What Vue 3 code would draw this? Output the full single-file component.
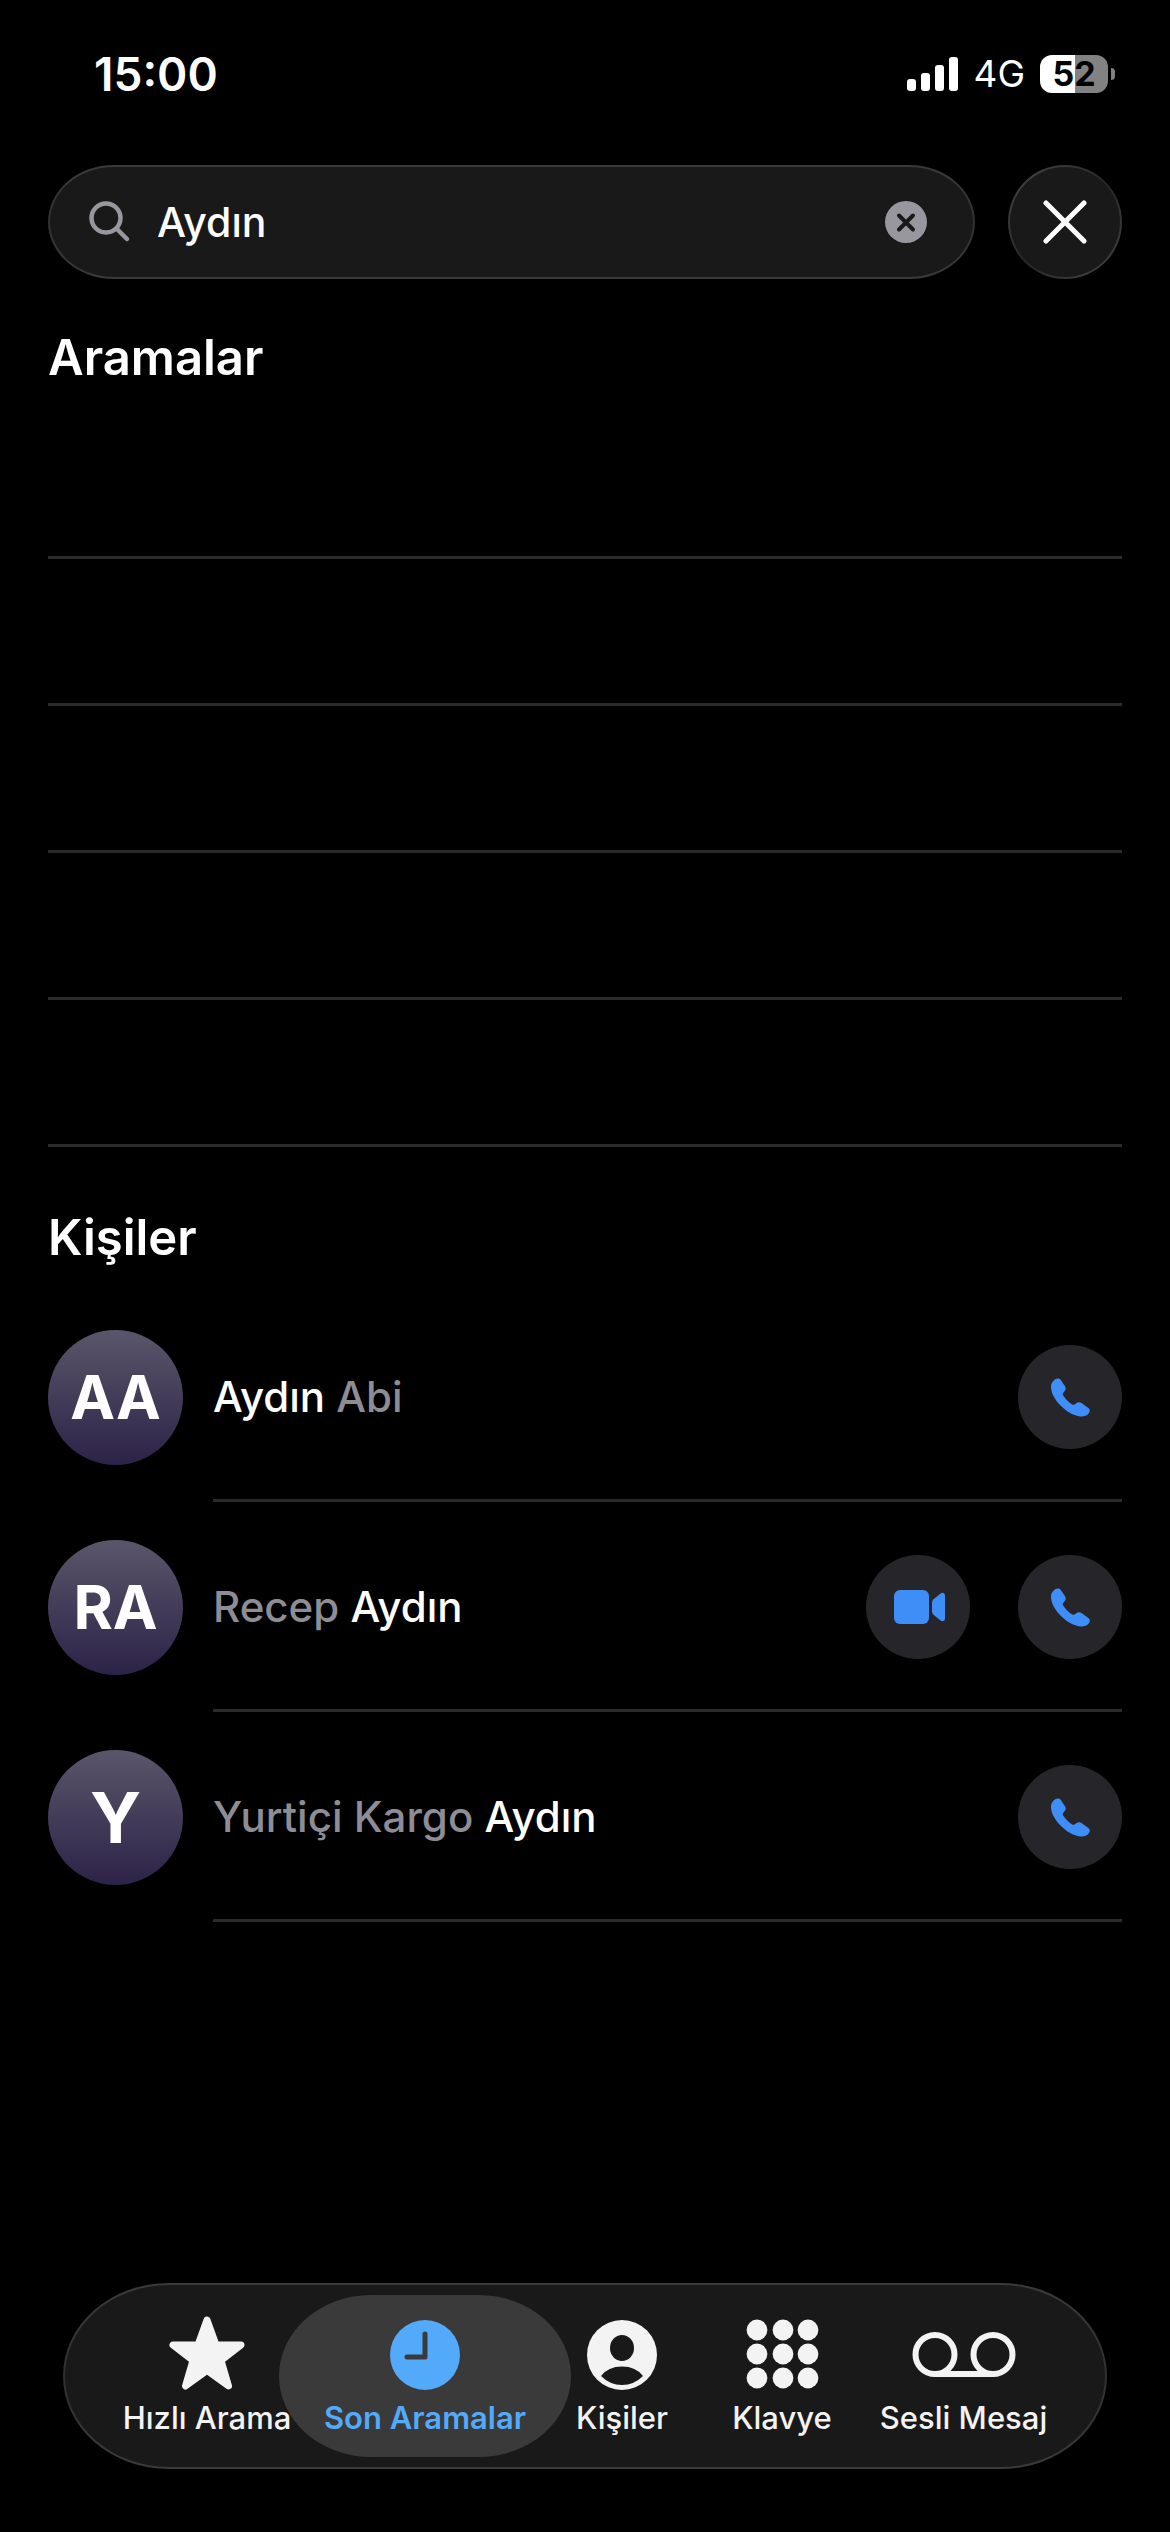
<script setup>
import { ref } from 'vue'

const query = ref('Aydın')

const calls = [1, 2, 3, 4, 5]

const contacts = [
  { initials: 'AA', parts: [{ text: 'Aydın', match: true }, { text: ' Abi' }], video: false },
  { initials: 'RA', parts: [{ text: 'Recep ' }, { text: 'Aydın', match: true }], video: true },
  { initials: 'Y', parts: [{ text: 'Yurtiçi Kargo ' }, { text: 'Aydın', match: true }], video: false }
]

const keypadColumns = [13, 39, 64]
const keypadRows = [14, 38, 62]
</script>

<template>
  <div class="screen">
    <header class="status">
      <time class="clock">15:00</time>
      <div class="indicators">
        <svg class="signal" viewBox="0 0 51 34" aria-hidden="true">
          <rect x="0" y="22" width="9" height="12" rx="3" />
          <rect x="14" y="16" width="9" height="18" rx="3" />
          <rect x="28" y="8" width="9" height="26" rx="3" />
          <rect x="42" y="0" width="9" height="34" rx="3" />
        </svg>
        <span class="network">4G</span>
        <div class="battery">
          <span class="level">52</span>
          <span class="tip"></span>
        </div>
      </div>
    </header>

    <form class="search" role="search" @submit.prevent>
      <div class="field">
        <svg class="lens" viewBox="0 0 42 42" aria-hidden="true">
          <circle cx="17" cy="17" r="14.5" />
          <path d="M27.5 27.5L38 38" />
        </svg>
        <input v-model="query" type="text" aria-label="Ara" />
        <button type="button" class="clear" aria-label="Temizle" @click="query = ''">
          <svg viewBox="0 0 42 42" aria-hidden="true">
            <circle cx="21" cy="21" r="21" />
            <path d="M14 14.5L28 28.5M28 14.5L14 28.5" />
          </svg>
        </button>
      </div>
      <button type="button" class="close" aria-label="Kapat">
        <svg viewBox="0 0 44 44" aria-hidden="true">
          <path d="M3 3L41 41M41 3L3 41" />
        </svg>
      </button>
    </form>

    <main>
      <section>
        <h2>Aramalar</h2>
        <ul>
          <li v-for="call in calls" :key="call" class="call"></li>
        </ul>
      </section>

      <section class="people">
        <h2>Kişiler</h2>
        <ul>
          <li v-for="person in contacts" :key="person.initials" class="contact">
            <div class="avatar" :class="{ single: person.initials.length === 1 }">{{ person.initials }}</div>
            <div class="details">
              <p class="name"><span v-for="part in person.parts" :key="part.text" :class="{ match: part.match }">{{ part.text }}</span></p>
              <button v-if="person.video" type="button" class="action" aria-label="Görüntülü ara">
                <svg class="video" viewBox="-4 0 56 34" aria-hidden="true">
                  <rect x="0" y="0" width="35" height="34" rx="6" />
                  <path d="M38 12.5Q38 10.5 39.5 9.2L46.5 3.6Q48 2.500 49.5 3Q51 3.5 51 5.5V28.5Q51 30.5 49.5 31Q48 31.5 46.5 30.4L39.5 24.8Q38 23.5 38 21.5Z" />
                </svg>
              </button>
              <button type="button" class="action" aria-label="Ara">
                <svg class="phone" viewBox="0 0 39 39" aria-hidden="true">
                  <path d="M2.5 2.8C5 0.2 7.8 -0.4 9.8 2L14 8.2C15.3 10.2 14.8 11.7 13.5 13.3L12.2 15C11.600 15.8 11.6 16.5 12 17.2C14 20.5 18 24.5 21.2 26.4C22 26.9 22.6 26.9 23.4 26.5L25.3 25.2C27 24 28.8 23.9 30.5 25L36.7 29.4C39.3 31.2 39.4 33.2 37.6 35.5C35.3 38.3 32 38.9 28 38.3C22.5 37.300 16 34 10 28C4 22 0.3 15.5 0 9.5C-0.1 6.5 0.7 4.5 2.5 2.8Z" />
                </svg>
              </button>
            </div>
          </li>
        </ul>
      </section>
    </main>

    <nav class="tabs">
      <a href="#hizli" class="tab">
        <svg class="icon" viewBox="0 0 76 74" aria-hidden="true">
          <path class="star" d="M38 4L47 29H72L52 44.5L59.5 70L38 54.5L16.5 70L24 44.5L4 29H29Z" />
        </svg>
        <span>Hızlı Arama</span>
      </a>
      <a href="#son" class="tab active" aria-current="page">
        <svg class="icon" viewBox="0 0 76 74" aria-hidden="true">
          <circle cx="38" cy="39" r="35" />
          <path class="hands" d="M38 18V41H20" />
        </svg>
        <span>Son Aramalar</span>
      </a>
      <a href="#kisiler" class="tab">
        <svg class="icon" viewBox="0 0 76 74" aria-hidden="true">
          <circle cx="38" cy="39" r="35" />
          <ellipse class="hole" cx="38" cy="32" rx="12" ry="13" />
          <path class="hole" d="M17 60Q24 50.5 38 50.5Q52 50.5 59 60Q50 69 38 69Q26 69 17 60Z" />
        </svg>
        <span>Kişiler</span>
      </a>
      <a href="#klavye" class="tab">
        <svg class="icon" viewBox="0 0 76 74" aria-hidden="true">
          <template v-for="cy in keypadRows" :key="cy">
            <circle v-for="cx in keypadColumns" :key="cx" :cx="cx" :cy="cy" r="10.4" />
          </template>
        </svg>
        <span>Klavye</span>
      </a>
      <a href="#sesli" class="tab">
        <svg class="icon wide" viewBox="0 0 104 74" aria-hidden="true">
          <circle class="reel" cx="23" cy="38.5" r="19.5" />
          <circle class="reel" cx="81" cy="38.5" r="19.5" />
          <path class="reel" d="M23 58H81" />
        </svg>
        <span>Sesli Mesaj</span>
      </a>
    </nav>
  </div>
</template>

<style>
body {
  margin: 0;
  background: #000;
}
</style>

<style scoped>
.screen {
  box-sizing: border-box;
  display: flex;
  flex-direction: column;
  min-height: 100vh;
  padding: 46px 48px 63px;
  background: #000;
  color: #fff;
  font-family: Inter, "Liberation Sans", sans-serif;
}

button {
  display: flex;
  align-items: center;
  justify-content: center;
  flex: none;
  padding: 0;
  border: 0;
  cursor: pointer;
}

ul,
h2,
p {
  margin: 0;
  padding: 0;
  list-style: none;
}

.status {
  display: flex;
  align-items: center;
  justify-content: space-between;
  padding: 0 7px 0 46px;
}

.clock {
  font-size: 46px;
  line-height: 56px;
  font-weight: 600;
}

.indicators {
  display: flex;
  align-items: center;
  gap: 15px;
}

.signal {
  width: 51px;
  height: 34px;
  fill: #fff;
}

.network {
  font-size: 37px;
  line-height: 38px;
}

.battery {
  display: flex;
  align-items: center;
  gap: 3px;
}

.level {
  width: 68px;
  border-radius: 12px;
  background: linear-gradient(90deg, #fff 52%, #828282 52%);
  color: #000;
  font-size: 34px;
  line-height: 38px;
  font-weight: 700;
  text-align: center;
}

.tip {
  width: 4px;
  height: 12px;
  border-radius: 0 6px 6px 0;
  background: #828282;
}

.search {
  display: flex;
  gap: 33px;
  margin-top: 63px;
}

.field,
.close {
  box-sizing: border-box;
  height: 114px;
  border: 2px solid transparent;
  background:
    linear-gradient(#191919, #191919) padding-box,
    linear-gradient(135deg, #484848, #262626 50%, #444) border-box;
}

.field {
  display: flex;
  align-items: center;
  flex: 1;
  min-width: 0;
  padding: 0 46px 0 39px;
  border-radius: 66px / 57px;
  background:
    linear-gradient(#191919, #191919) padding-box,
    linear-gradient(#3a3a3a, #303030 50%, #3a3a3a) border-box;
}

.lens {
  flex: none;
  width: 42px;
  height: 42px;
  fill: none;
  stroke: #98979f;
  stroke-width: 4.5;
  stroke-linecap: round;
}

input {
  flex: 1;
  min-width: 0;
  margin: 0 24px 0 26px;
  padding: 0;
  border: 0;
  outline: 0;
  background: none;
  color: #fff;
  font: 500 41px/52px Inter, "Liberation Sans", sans-serif;
}

.clear {
  background: none;
}

.clear svg {
  width: 42px;
  height: 42px;
  fill: #98979f;
}

.clear path {
  stroke: #191919;
  stroke-width: 4;
  stroke-linecap: round;
}

.close {
  width: 114px;
  border-radius: 50%;
}

.close svg {
  width: 44px;
  height: 44px;
  stroke: #fff;
  stroke-width: 5;
  stroke-linecap: round;
}

h2 {
  margin: 49px 0 24px;
  font-size: 49px;
  line-height: 60px;
  font-weight: 600;
}

.people h2 {
  margin-top: 61px;
}

.call {
  box-sizing: border-box;
  height: 147px;
  border-bottom: 3px solid #2b2b2d;
}

.contact {
  display: flex;
  align-items: center;
  gap: 30px;
}

.avatar {
  flex: none;
  width: 135px;
  border-radius: 50%;
  background: linear-gradient(#5a566a, #2c2348);
  font-size: 60px;
  line-height: 135px;
  font-weight: 700;
  text-align: center;
}

.avatar.single {
  font-size: 70px;
}

.details {
  box-sizing: border-box;
  display: flex;
  align-items: center;
  flex: 1;
  min-width: 0;
  gap: 48px;
  height: 210px;
  border-top: 3px solid transparent;
  border-bottom: 3px solid #2b2b2d;
}

.name {
  flex: 1;
  color: #8e8d95;
  font-size: 42px;
  line-height: 52px;
  font-weight: 500;
  white-space: pre-wrap;
}

.match {
  color: #fff;
}

.action {
  width: 104px;
  height: 104px;
  border-radius: 50%;
  background: #262529;
}

.action svg {
  fill: #3f8ef7;
}

.phone {
  width: 39px;
  height: 39px;
}

.video {
  width: 56px;
  height: 34px;
}

.tabs {
  isolation: isolate;
  display: grid;
  grid-template-columns: 232fr 204fr 190fr 130fr 233fr;
  margin: auto 15px 0;
  padding: 31px 25px 31px 26px;
  border: 2px solid transparent;
  border-radius: 106px / 93px;
  background:
    linear-gradient(#191919, #191919) padding-box,
    linear-gradient(#3a3a3a, #303030 50%, #3a3a3a) border-box;
}

.tab {
  position: relative;
  display: flex;
  flex-direction: column;
  align-items: center;
  gap: 10px;
  min-width: 0;
  color: #f3f3f3;
  font-size: 31px;
  line-height: 36px;
  font-weight: 500;
  text-decoration: none;
  white-space: nowrap;
}

.active {
  color: #53a9fa;
  font-weight: 600;
}

.active::before {
  content: "";
  position: absolute;
  z-index: -1;
  inset: -21px -44px;
  border-radius: 92px / 81px;
  background: #3a3a3a;
}

.icon {
  width: 76px;
  height: 74px;
  fill: currentColor;
}

.wide {
  width: 104px;
}

.star {
  stroke: currentColor;
  stroke-width: 7;
  stroke-linejoin: round;
}

.hands {
  fill: none;
  stroke: #3a3a3a;
  stroke-width: 5;
  stroke-linecap: round;
  stroke-linejoin: round;
}

.hole {
  fill: #191919;
}

.reel {
  fill: none;
  stroke: currentColor;
  stroke-width: 6;
}
</style>
